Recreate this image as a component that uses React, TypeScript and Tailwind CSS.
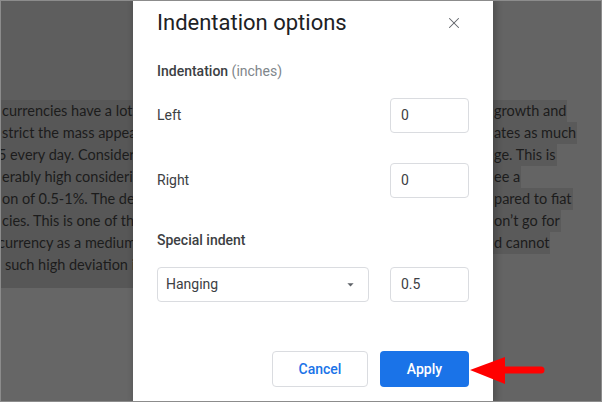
import { X } from "lucide-react"

const LEFT_LINES = [
  { text: "currencies have a lot", shift: "ml-[1px]" },
  { text: "strict the mass appea", shift: "ml-[1px]" },
  { text: "5 every day. Consider", shift: "-ml-[3px]" },
  { text: "erably high considerin", shift: "ml-[1px]" },
  { text: "on of 0.5-1%. The dev", shift: "ml-[1px]" },
  { text: "cies. This is one of th", shift: "ml-[1px]" },
  { text: "currency as a medium", shift: "-ml-[3px]" },
  { text: "such high deviation i", shift: "ml-[4px]" },
]

const RIGHT_LINES = [
  "growth and",
  "ates as much",
  "ge. This is",
  "ee a",
  "pared to fiat",
  "on’t go for",
  "d cannot",
]

function NumberField({ value }: { value: string }) {
  return (
    <div className="w-[79px] h-[35px] border border-[#dadce0] rounded-[4px] flex items-center pl-[10px] text-[14px] text-[#3c4043]">
      {value}
    </div>
  )
}

export default function App() {
  return (
    <div className="relative w-[602px] h-[402px] overflow-hidden border border-[#8c8c8c] bg-[#666666] flex font-['Roboto',sans-serif]">
      {/* Document, left of the dialog */}
      <div className="w-[132px] shrink-0 flex flex-col font-['Lato',sans-serif] text-[14.5px] text-[#1c1c1c]">
        <div className="h-[99px] bg-[#5e5e5e]" />
        {LEFT_LINES.map((line) => (
          <div key={line.text} className="h-[22px] leading-[22px] bg-[#575757] overflow-hidden whitespace-nowrap">
            <span className={`block ${line.shift}`}>{line.text}</span>
          </div>
        ))}
        <div className="h-[12px] bg-[#575757]" />
      </div>

      {/* Dialog */}
      <div className="relative z-10 w-[360px] shrink-0 h-full bg-white shadow-[2px_0_6px_2px_rgba(0,0,0,0.18)] px-6 flex flex-col">
        <div className="h-[44px] flex items-center justify-between">
          <h1 className="text-[22px] leading-7 text-[#202124]">Indentation options</h1>
          <X className="w-[18px] h-[18px] mr-[6px] text-[#5f6368]" strokeWidth={1.4} />
        </div>

        <div className="mt-4 h-5 leading-5 text-[14px]">
          <span className="font-medium text-[#3c4043]">Indentation</span>{" "}
          <span className="text-[#80868b]">(inches)</span>
        </div>

        <div className="mt-[17px] flex items-center justify-between">
          <span className="text-[14px] text-[#3c4043]">Left</span>
          <NumberField value="0" />
        </div>

        <div className="mt-[30px] flex items-center justify-between">
          <span className="text-[14px] text-[#3c4043]">Right</span>
          <NumberField value="0" />
        </div>

        <div className="mt-8 h-5 leading-5 text-[14px] font-medium text-[#3c4043]">Special indent</div>

        <div className="mt-[17px] flex items-center justify-between">
          <div className="w-[212px] h-[35px] border border-[#dadce0] rounded-[4px] flex items-center justify-between pl-[8px] pr-[10px] text-[14px] text-[#3c4043]">
            <span>Hanging</span>
            <svg width="15" height="15" viewBox="0 0 24 24" fill="#5f6368">
              <path d="M7 10l5 5 5-5z" />
            </svg>
          </div>
          <NumberField value="0.5" />
        </div>

        <div className="mt-[49px] flex justify-end gap-3">
          <button className="w-[96px] h-[36px] border border-[#dadce0] rounded-[4px] text-[14px] font-medium text-[#1a73e8] bg-white">
            Cancel
          </button>
          <button className="w-[89px] h-[36px] rounded-[4px] text-[14px] font-medium text-white bg-[#1a73e8]">
            Apply
          </button>
        </div>
      </div>

      {/* Document, right of the dialog */}
      <div className="flex-1 flex flex-col pt-[99px] font-['Lato',sans-serif] text-[14.5px] text-[#1c1c1c] bg-[#646464]">
        {RIGHT_LINES.map((line) => (
          <div key={line} className="h-[22px] leading-[22px] whitespace-nowrap">
            <span className="inline-block h-[22px] bg-[#5a5a5a] pl-[1px] pr-[1px]">{line}</span>
          </div>
        ))}
      </div>

      {/* Red annotation arrow */}
      <svg className="absolute z-20 left-[467px] top-[354px]" width="78" height="31" viewBox="0 0 78 31">
        <polygon points="2,15 37,2 37,29" fill="#ff0000" />
        <line x1="35" y1="15" x2="73" y2="15" stroke="#ff0000" strokeWidth="7" strokeLinecap="round" />
      </svg>
    </div>
  )
}
